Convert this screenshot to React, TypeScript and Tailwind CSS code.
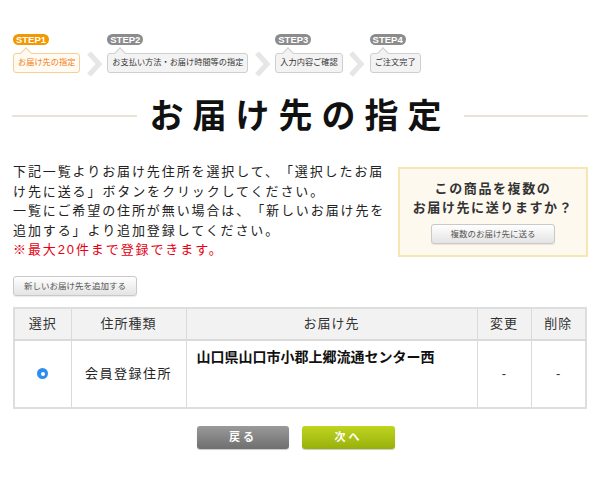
import React from "react";

const steps = [
  { no: "STEP1", label: "お届け先の指定", active: true },
  { no: "STEP2", label: "お支払い方法・お届け時間等の指定", active: false },
  { no: "STEP3", label: "入力内容ご確認", active: false },
  { no: "STEP4", label: "ご注文完了", active: false },
];

function Chevron() {
  return (
    <div className="w-[27px] h-[22px] mt-[19px] flex items-center justify-center">
      <svg width="16" height="26" viewBox="0 0 16 26">
        <polyline points="3,2 13,13 3,24" fill="none" stroke="#e6e6e6" strokeWidth="5" />
      </svg>
    </div>
  );
}

function Step({ no, label, active }: { no: string; label: string; active: boolean }) {
  return (
    <div className="flex flex-col items-start">
      <div
        className={`w-[36px] h-[11px] rounded-full text-center text-white text-[9.5px] font-bold leading-[11px] ${
          active ? "bg-[#f39800]" : "bg-[#8c8c8c]"
        }`}
      >
        {no}
      </div>
      <div
        className={`relative mt-[8px] h-[20px] px-[4px] rounded-[3px] border text-[8.2px] leading-[18px] whitespace-nowrap ${
          active
            ? "bg-[#fffaf2] border-[#f6cf96] text-[#ee7f12]"
            : "bg-[#f3f3f3] border-[#cfcfcf] text-[#333]"
        }`}
      >
        <span
          className={`absolute -top-[5px] left-[8px] w-[8px] h-[8px] rotate-45 border-l border-t ${
            active ? "bg-[#fffaf2] border-[#f6cf96]" : "bg-[#f3f3f3] border-[#cfcfcf]"
          }`}
        />
        <span className="relative">{label}</span>
      </div>
    </div>
  );
}

function GrayButton({ children, className = "" }: { children: React.ReactNode; className?: string }) {
  return (
    <button
      className={`h-[20px] rounded-[3px] border border-[#c9c9c9] bg-gradient-to-b from-[#ffffff] to-[#e4e4e4] text-[8.5px] text-[#555] leading-[18px] whitespace-nowrap shadow-[0_1px_1px_rgba(0,0,0,0.08)] ${className}`}
    >
      {children}
    </button>
  );
}

export default function App() {
  return (
    <div
      className="w-[600px] h-[500px] bg-white px-[12px] pt-[34px] text-[#333]"
      style={{ fontFamily: '"Liberation Sans", "Noto Sans CJK JP", sans-serif' }}
    >
      {/* Steps */}
      <div className="flex items-start pl-[1px]">
        {steps.map((s, i) => (
          <React.Fragment key={s.no}>
            {i > 0 && <Chevron />}
            <Step {...s} />
          </React.Fragment>
        ))}
      </div>

      {/* Title */}
      <div className="mt-[21px] flex items-center">
        <div className="flex-1 h-[2px] bg-[#e7e4d6]" />
        <h1 className="mx-[13px] text-[34px] leading-[40px] font-bold tracking-[9px] text-[#111]">
          お届け先の指定
        </h1>
        <div className="flex-1 h-[2px] bg-[#e7e4d6]" />
      </div>

      {/* Description */}
      <div className="mt-[26px] flex justify-between items-start pl-[1px]">
        <p className="text-[13px] leading-[19.5px] tracking-[1.9px] text-[#222] whitespace-nowrap [text-spacing-trim:space-all]">
          下記一覧よりお届け先住所を選択して、「選択したお届
          <br />
          け先に送る」ボタンをクリックしてください。
          <br />
          一覧にご希望の住所が無い場合は、「新しいお届け先を
          <br />
          追加する」より追加登録してください。
          <br />
          <span className="text-[#e60012]">※最大20件まで登録できます。</span>
        </p>
        <div className="mt-[5px] w-[190px] h-[90px] bg-[#fdf9ef] border-2 border-[#f5e6b4] flex flex-col items-center pt-[10px]">
          <div className="text-[13px] leading-[19px] font-bold tracking-[1.6px] text-[#333] text-center">
            この商品を複数の
            <br />
            お届け先に送りますか？
          </div>
          <GrayButton className="mt-[7px] w-[124px]">複数のお届け先に送る</GrayButton>
        </div>
      </div>

      <GrayButton className="mt-[16px] ml-[1px] w-[124px]">新しいお届け先を追加する</GrayButton>

      {/* Table */}
      <table className="mt-[11px] ml-[1px] w-[572px] border-collapse border-2 border-[#dedede] table-fixed">
        <colgroup>
          <col className="w-[57px]" />
          <col className="w-[115px]" />
          <col className="w-[291px]" />
          <col className="w-[54px]" />
          <col className="w-[55px]" />
        </colgroup>
        <thead>
          <tr className="h-[32px] bg-[#f2f2f2] text-[13px] tracking-[1px] text-[#333]">
            <th className="font-normal border border-[#dadada]">選択</th>
            <th className="font-normal border border-[#dadada]">住所種類</th>
            <th className="font-normal border border-[#dadada]">お届け先</th>
            <th className="font-normal border border-[#dadada]">変更</th>
            <th className="font-normal border border-[#dadada]">削除</th>
          </tr>
        </thead>
        <tbody>
          <tr className="h-[68px] text-[13px]">
            <td className="border border-[#dadada] border-t-2">
              <div className="flex justify-center">
                <span className="w-[11px] h-[11px] rounded-full bg-[#2f8cf0] flex items-center justify-center">
                  <span className="w-[4px] h-[4px] rounded-full bg-white" />
                </span>
              </div>
            </td>
            <td className="border border-[#dadada] border-t-2 text-center tracking-[1.5px] text-[#222]">
              会員登録住所
            </td>
            <td className="border border-[#dadada] border-t-2 align-top pl-[10px] pt-[6px] text-[14px] font-bold text-[#111] leading-[20px]">
              山口県山口市小郡上郷流通センター西
            </td>
            <td className="border border-[#dadada] border-t-2 text-center">-</td>
            <td className="border border-[#dadada] border-t-2 text-center">-</td>
          </tr>
        </tbody>
      </table>

      {/* Buttons */}
      <div className="mt-[17px] flex justify-center gap-[13px] pr-[8px]">
        <button className="w-[92px] h-[23px] rounded-[3px] bg-gradient-to-b from-[#9a9a9a] to-[#6f6f6f] text-white text-[11px] font-bold tracking-[3px] shadow-[0_1px_1px_rgba(0,0,0,0.2)]">
          戻る
        </button>
        <button className="w-[93px] h-[23px] rounded-[3px] bg-gradient-to-b from-[#bfd51f] to-[#99b00b] text-white text-[11px] font-bold tracking-[3px] shadow-[0_1px_1px_rgba(0,0,0,0.2)]">
          次へ
        </button>
      </div>
    </div>
  );
}
